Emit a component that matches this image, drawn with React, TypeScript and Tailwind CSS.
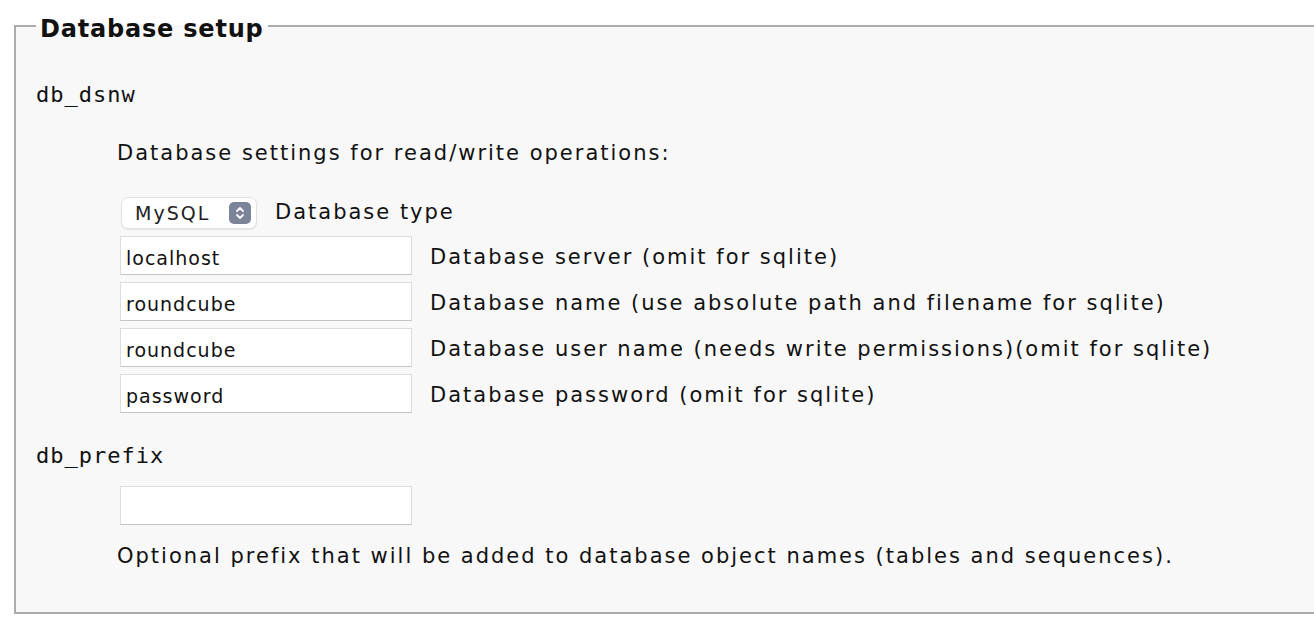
import React from 'react';

const sans = "font-['DejaVu_Sans',sans-serif]";
const mono = "font-['DejaVu_Sans_Mono',monospace]";
const body = `text-[21px] tracking-[2px] ${sans}`;

const fields = [
  { value: 'localhost', label: 'Database server (omit for sqlite)' },
  { value: 'roundcube', label: 'Database name (use absolute path and filename for sqlite)' },
  { value: 'roundcube', label: 'Database user name (needs write permissions)(omit for sqlite)' },
  { value: 'password', label: 'Database password (omit for sqlite)' },
];

const TextBox: React.FC<{ value: string }> = ({ value }) => (
  <div className={`w-[292px] h-[39px] shrink-0 bg-white border border-[#dcdcdc] border-b-[#c4c4c4] border-b-dotted flex items-center px-[5px] pt-[5px] text-[19px] tracking-[1px] text-[#111] ${sans}`}>
    {value}
  </div>
);

const SelectArrows: React.FC = () => (
  <span className="w-[22px] h-[22px] rounded-[5px] bg-[#7b8499] flex items-center justify-center">
    <svg width="12" height="16" viewBox="0 0 12 16" fill="none" stroke="white" strokeWidth="1.8" strokeLinecap="round" strokeLinejoin="round">
      <path d="M3 6 L6 3 L9 6" />
      <path d="M3 10 L6 13 L9 10" />
    </svg>
  </span>
);

export default function App() {
  return (
    <div className="w-[1314px] h-[636px] overflow-hidden bg-white text-[#111]">
      <fieldset className="ml-[14px] mt-[12px] w-[1330px] h-[602px] border-2 border-[#acacac] bg-[#f8f8f8] pl-[20px] pr-4">
        <legend className={`px-[4px] text-[24px] font-bold leading-[28px] tracking-[0.8px] text-[#111] ${sans}`}>
          <span className="relative top-[3px]">Database setup</span>
        </legend>

        <div className={`mt-[43px] text-[22px] leading-[24px] tracking-[1px] ${mono}`}>db_dsnw</div>

        <div className="pl-[81px]">
          <p className={`mt-[33px] leading-[26px] ${body}`}>Database settings for read/write operations:</p>

          <div className="mt-[31px] ml-[4px] flex items-center gap-[18px] h-[32px]">
            <div className={`w-[136px] h-[32px] rounded-[7px] bg-white border border-[#e2e2e2] shadow-[0_1px_1px_rgba(0,0,0,0.08)] flex items-center justify-between pl-[13px] pr-[5px] text-[19px] tracking-[2px] text-[#222] ${sans}`}>
              MySQL
              <SelectArrows />
            </div>
            <span className={body}>Database type</span>
          </div>

          <div className="mt-[7px] flex flex-col gap-[7px] ml-[3px]">
            {fields.map((f, i) => (
              <div key={i} className="flex items-center gap-[18px]">
                <TextBox value={f.value} />
                <span className={`pt-[4px] ${body}`}>{f.label}</span>
              </div>
            ))}
          </div>
        </div>

        <div className={`mt-[31px] text-[22px] leading-[24px] tracking-[1px] ${mono}`}>db_prefix</div>

        <div className="pl-[81px]">
          <div className="mt-[18px] ml-[3px]">
            <TextBox value="" />
          </div>
          <p className={`mt-[18px] leading-[26px] ${body}`}>
            Optional prefix that will be added to database object names (tables and sequences).
          </p>
        </div>
      </fieldset>
    </div>
  );
}
